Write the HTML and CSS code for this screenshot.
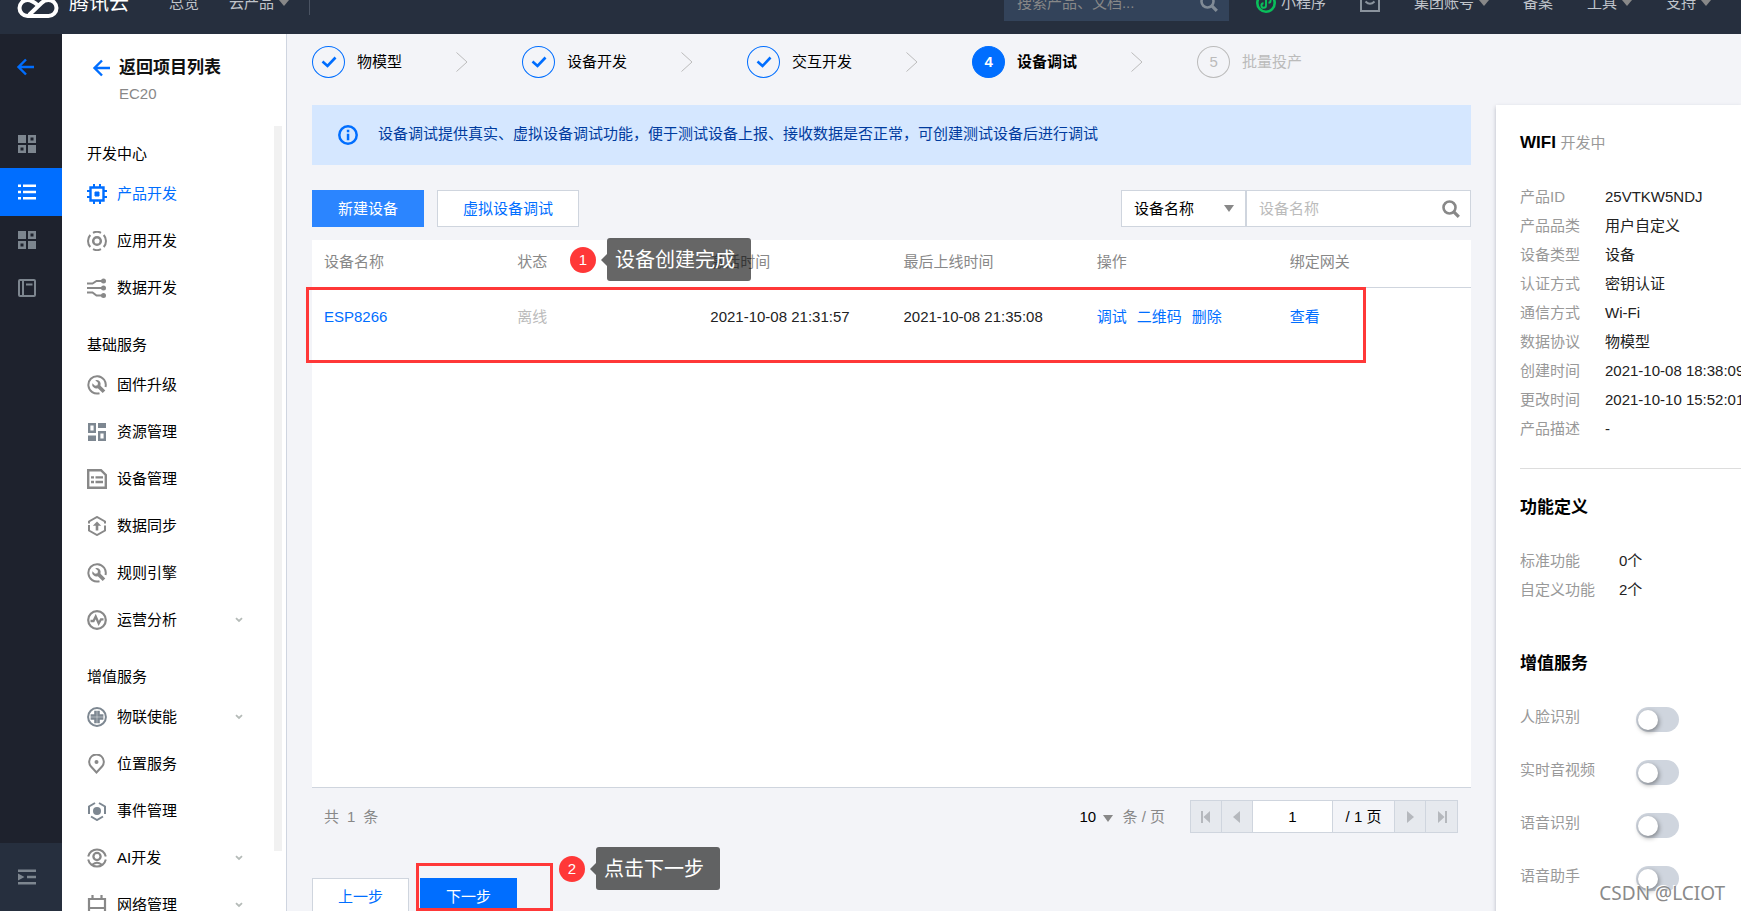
FILE: index.html
```html
<!DOCTYPE html>
<html lang="zh-CN">
<head>
<meta charset="utf-8">
<title>设备调试</title>
<link rel="stylesheet" href="styles.css">
</head>
<body>
<svg class="sprite" aria-hidden="true">
  <symbol id="back" viewBox="0 0 18 18"><path d="M10 1.5 2.5 9l7.500 7.500M2.500 9H18" fill="none" stroke="currentColor" stroke-width="2.400"/></symbol>
  <symbol id="grid" viewBox="0 0 18 18"><path fill="currentColor" fill-rule="evenodd" d="M0 0h8v8H0zM10 0h8v8h-8zm2.500 2.500v3h3v-3zM0 10h8v8H0zm2.500 2.500v3h3v-3zM10 10h8v8h-8z"/></symbol>
  <symbol id="wrench" viewBox="0 0 20 20"><path d="M12.500 18.200A8.700 8.700 0 1 1 18.500 12" fill="none" stroke="currentColor" stroke-width="2"/><path fill="currentColor" d="M8.200 5.200a4.300 4.300 0 0 1 5.300 5.600l4.800 4.700-2.600 2.600-4.900-4.800a4.300 4.300 0 0 1-5.500-5.100l2.700 2.600 2.500-.6.500-2.400z"/></symbol>
  <symbol id="search" viewBox="0 0 18 18"><circle cx="7.500" cy="7.500" r="6" fill="none" stroke="currentColor" stroke-width="2.600"/><path d="m11.800 11.800 5 5" stroke="currentColor" stroke-width="3.200"/></symbol>
  <symbol id="down" viewBox="0 0 8 6"><path d="M1 1.200 4 4l3-2.800" fill="none" stroke="currentColor" stroke-width="1.800"/></symbol>
  <symbol id="check" viewBox="0 0 16 12"><path d="m1.500 5.500 5 4.500 8-8.500" fill="none" stroke="currentColor" stroke-width="2.600"/></symbol>
  <symbol id="chevron" viewBox="0 0 12 20"><path d="m.5.500 10.500 9.500L.5 19.500" fill="none" stroke="currentColor"/></symbol>
</svg>

<header class="topbar">
  <svg class="logo" viewBox="0 0 42 30"><g fill="none" stroke="#fff" stroke-width="4"><path d="M20.500 17c-4-3.500-6.500-5-10-5a8 8 0 0 0 0 16h21a8 8 0 0 0 0-16c-3 0-5 1-7 3L12 27"/><path d="M6 13C7 6 12 2 19 2c6 0 10 3.500 12 9"/></g></svg>
  <span class="brand">腾讯云</span>
  <nav class="topnav">
    <a href="#">总览</a>
    <a href="#" class="caret">云产品</a>
  </nav>
  <span class="divider"></span>
  <div class="topsearch">
    <input type="text" aria-label="搜索" placeholder="搜索产品、文档...">
    <svg class="i18"><use href="#search"/></svg>
  </div>
  <nav class="toplinks">
    <a href="#" class="mini"><svg class="i20" viewBox="0 0 20 20" fill="none" stroke="#0abf5b"><circle cx="10" cy="10" r="8.700" stroke-width="2.600"/><path d="M7.500 10.200a2.300 2.300 0 1 0 2.500 2.300V7.500a2.300 2.300 0 1 1 2.500 2.300" stroke-width="1.900"/></svg>小程序</a>
    <a href="#" aria-label="消息"><svg class="i20" viewBox="0 0 20 20" fill="none" stroke="#8a939d" stroke-width="2"><path d="M1 3h18v15H1z"/><path d="M5.500 8.500q4.500 4.500 9 0"/></svg></a>
    <a href="#" class="caret">集团账号</a>
    <a href="#">备案</a>
    <a href="#" class="caret">工具</a>
    <a href="#" class="caret">支持</a>
  </nav>
</header>

<div class="shell">
  <nav class="rail">
    <a href="#" class="rail-back" aria-label="返回"><svg class="i18"><use href="#back"/></svg></a>
    <a href="#" aria-label="概览"><svg class="i18"><use href="#grid"/></svg></a>
    <a href="#" class="active" aria-label="项目列表"><svg class="i18" viewBox="0 0 18 18"><path fill="currentColor" d="M0 1.500h3v2.500H0zM5 1.500h13v2.500H5zM0 7.800h3v2.500H0zM5 7.800h13v2.500H5zM0 14h3v2.500H0zM5 14h13v2.500H5z"/></svg></a>
    <a href="#" aria-label="应用"><svg class="i18"><use href="#grid"/></svg></a>
    <a href="#" aria-label="文档"><svg class="i18" viewBox="0 0 18 18" fill="none" stroke="currentColor"><rect x="1" y="1" width="16" height="16" rx="1" stroke-width="2"/><path d="M5 1v16M8 5.500h6.500" stroke-width="2"/></svg></a>
    <button class="rail-toggle" aria-label="展开菜单"><svg class="i18" viewBox="0 0 18 18"><path fill="currentColor" d="M0 1.500h18V4H0zM9 7.800h9v2.400H9zM0 14h18v2.500H0zM0 5.500 6.500 9 0 12.500z"/></svg></button>
  </nav>

  <aside class="sidebar">
    <div class="side-head">
      <a href="#"><svg class="i18"><use href="#back"/></svg>返回项目列表</a>
      <p>EC20</p>
    </div>
    <div class="side-body">
      <div class="menu">
        <section>
          <h3>开发中心</h3>
          <a href="#" class="current"><svg class="i20" viewBox="0 0 20 20" fill="none" stroke="currentColor"><path d="M3.500 3.500h13v13h-13z" stroke-width="2.400"/><path d="M8 8h4v4H8z" fill="currentColor"/><path d="M7 0v3M13 0v3M7 17v3M13 17v3M0 7h3M0 13h3M17 7h3M17 13h3" stroke-width="2"/></svg>产品开发</a>
          <a href="#"><svg class="i20" viewBox="0 0 20 20" fill="none" stroke="currentColor" stroke-width="2"><circle cx="10" cy="10" r="3.800" stroke-width="2.500"/><path d="M6 1.800a9 9 0 0 1 8 0M6 18.200a9 9 0 0 0 8 0M3.300 4a9 9 0 0 0 0 12M16.700 4a9 9 0 0 1 0 12"/></svg>应用开发</a>
          <a href="#"><svg class="i20" viewBox="0 0 20 20" fill="none" stroke="currentColor" stroke-width="2"><path d="M0 5.500h5.500l4-2.500H15M0 10h16M0 14.500h5.500l4 3H15"/><g fill="currentColor" stroke="none"><circle cx="16.500" cy="3" r="2.500"/><circle cx="16.500" cy="10" r="2.500"/><circle cx="16.500" cy="17.500" r="2.500"/></g></svg>数据开发</a>
        </section>
        <section>
          <h3>基础服务</h3>
          <a href="#"><svg class="i20"><use href="#wrench"/></svg>固件升级</a>
          <a href="#" class="cool"><svg class="i20" viewBox="0 0 20 20" fill="none" stroke="currentColor" stroke-width="2.400"><path d="M2.200 2.200h5.600v7.600H2.200zM12.200 10.200h5.600v7.600h-5.600z"/><path fill="currentColor" stroke="none" d="M11 1h8v5h-8zM1 13.500h8v5.500H1z"/></svg>资源管理</a>
          <a href="#"><svg class="i20" viewBox="0 0 20 20"><path d="M1.200 1.200H14l4.800 4.800v12.800H1.200z" fill="none" stroke="currentColor" stroke-width="2.400"/><path fill="currentColor" d="M4 7.200h3v2.400H4zM8.500 7.200H16v2.400H8.500zM4 11.800h3v2.400H4zM8.500 11.800H16v2.400H8.500z"/></svg>设备管理</a>
          <a href="#"><svg class="i20" viewBox="0 0 20 20" fill="none" stroke="currentColor" stroke-width="2"><path d="M2 7.500V5.500L10 1l8 4.500v2M2 9v5.500L10 19l8-4.500V12M18 12V9.500"/><path d="M10 14.500V8" stroke-width="2.600"/><path d="m5.800 9.700 4.200-4.200 4.200 4.200z" fill="currentColor" stroke="none"/></svg>数据同步</a>
          <a href="#"><svg class="i20"><use href="#wrench"/></svg>规则引擎</a>
          <a href="#"><svg class="i20" viewBox="0 0 20 20" fill="none" stroke="currentColor"><circle cx="10" cy="10" r="8.800" stroke-width="2.200"/><path d="M3.500 11h3L8.700 6.500l3 7L14 9.300h2.500" stroke-width="2.300"/></svg>运营分析<svg class="more"><use href="#down"/></svg></a>
        </section>
        <section>
          <h3>增值服务</h3>
          <a href="#" class="cool"><svg class="i20" viewBox="0 0 20 20"><circle cx="10" cy="10" r="8.900" fill="none" stroke="currentColor" stroke-width="2"/><path fill="currentColor" d="M7.200 3.800h5.600v3.400h3.600v5.600h-3.600v3.400H7.200v-3.400H3.600V7.200h3.600z"/><path d="M10 3v14M3 10h14" stroke="#fff" stroke-width=".4"/></svg>物联使能<svg class="more"><use href="#down"/></svg></a>
          <a href="#"><svg class="i20" viewBox="0 0 20 20"><path d="M9.500 18.500 3.800 12.300a7.300 7.300 0 1 1 11.400 0z" fill="none" stroke="currentColor" stroke-width="2"/><circle cx="9.500" cy="8" r="2" fill="currentColor"/></svg>位置服务</a>
          <a href="#" class="cool"><svg class="i20" viewBox="0 0 20 20" fill="none" stroke="currentColor" stroke-width="2"><path d="M8 2 2 5.500V13M12 2l6 3.500V13M4 15.500l6 3.500 6-3.500"/><circle cx="10" cy="10" r="4" fill="currentColor" stroke="none"/></svg>事件管理</a>
          <a href="#"><svg class="i20" viewBox="0 0 20 20" fill="none" stroke="currentColor" stroke-width="2"><circle cx="10" cy="8.500" r="3.600" stroke-width="2.300"/><path d="M1.200 8.500a9 9 0 0 1 17.600 0M1.200 11.500a9 9 0 0 0 17.600 0M5.500 16.500q4.500-3.500 9 0"/></svg>AI开发<svg class="more"><use href="#down"/></svg></a>
          <a href="#"><svg class="i20" viewBox="0 0 20 20" fill="none" stroke="currentColor" stroke-width="2.200"><path d="M2 4h16v15H2zM2 13h16M5.500 0v4M14.500 0v4"/></svg>网络管理<svg class="more"><use href="#down"/></svg></a>
        </section>
      </div>
      <div class="track"></div>
    </div>
  </aside>

  <main class="main">
    <ol class="steps">
      <li><span class="dot"><svg><use href="#check"/></svg></span>物模型<svg class="chev"><use href="#chevron"/></svg></li>
      <li><span class="dot"><svg><use href="#check"/></svg></span>设备开发<svg class="chev"><use href="#chevron"/></svg></li>
      <li><span class="dot"><svg><use href="#check"/></svg></span>交互开发<svg class="chev"><use href="#chevron"/></svg></li>
      <li class="now"><span class="dot">4</span>设备调试<svg class="chev"><use href="#chevron"/></svg></li>
      <li class="todo"><span class="dot">5</span>批量投产</li>
    </ol>

    <div class="columns">
      <div class="work">
        <div class="alert">
          <svg class="i20" viewBox="0 0 20 20"><circle cx="10" cy="10" r="8.700" fill="none" stroke="#006eff" stroke-width="2.500"/><path fill="#006eff" d="M8.800 4.800h2.500v2.400H8.800zM8.800 8.700h2.500v6.500H8.800z"/></svg>
          <p>设备调试提供真实、虚拟设备调试功能，便于测试设备上报、接收数据是否正常，可创建测试设备后进行调试</p>
        </div>

        <div class="toolbar">
          <button class="btn primary hover">新建设备</button>
          <button class="btn">虚拟设备调试</button>
          <div class="filter">
            <div class="pick">
              <select aria-label="搜索字段"><option>设备名称</option></select>
            </div>
            <div class="query">
              <input type="text" aria-label="设备名称" placeholder="设备名称">
              <svg class="i18"><use href="#search"/></svg>
            </div>
          </div>
        </div>

        <div class="panel">
          <table>
            <thead><tr><th>设备名称</th><th>状态</th><th>激活时间</th><th>最后上线时间</th><th>操作</th><th>绑定网关</th></tr></thead>
            <tbody><tr>
              <td><a href="#">ESP8266</a></td><td class="off">离线</td><td>2021-10-08 21:31:57</td><td>2021-10-08 21:35:08</td>
              <td><div class="ops"><a href="#">调试</a><a href="#">二维码</a><a href="#">删除</a></div></td><td><a href="#">查看</a></td>
            </tr></tbody>
          </table>
          <div class="frame frame-row"></div>
          <div class="note note-one"><span class="num">1</span><span class="tip">设备创建完成</span></div>
        </div>

        <div class="pager">
          <div class="total"><span>共</span><span>1</span><span>条</span></div>
          <label class="size"><select aria-label="每页条数"><option>10</option></select>条 / 页</label>
          <div class="pages">
            <button aria-label="首页"><svg viewBox="0 0 10 12"><path fill="currentColor" d="M0 0h2v12H0zM9 0v12L2.500 6z"/></svg></button>
            <button aria-label="上一页"><svg viewBox="0 0 10 12"><path fill="currentColor" d="M8 0v12L1 6z"/></svg></button>
            <input type="text" value="1" aria-label="页码">
            <span>/ 1 页</span>
            <button aria-label="下一页"><svg viewBox="0 0 10 12"><path fill="currentColor" d="M2 0v12l7-6z"/></svg></button>
            <button aria-label="末页"><svg viewBox="0 0 10 12"><path fill="currentColor" d="M8 0h2v12H8zM1 0v12l6.500-6z"/></svg></button>
          </div>
        </div>

        <div class="actions">
          <button class="btn">上一步</button>
          <button class="btn primary">下一步</button>
          <div class="frame frame-next"></div>
          <div class="note note-two"><span class="num">2</span><span class="tip">点击下一步</span></div>
        </div>
      </div>

      <aside class="info">
        <h2 class="product">WIFI <small>开发中</small></h2>
        <dl class="facts">
          <dt>产品ID</dt><dd>25VTKW5NDJ</dd>
          <dt>产品品类</dt><dd>用户自定义</dd>
          <dt>设备类型</dt><dd>设备</dd>
          <dt>认证方式</dt><dd>密钥认证</dd>
          <dt>通信方式</dt><dd>Wi-Fi</dd>
          <dt>数据协议</dt><dd>物模型</dd>
          <dt>创建时间</dt><dd>2021-10-08 18:38:09</dd>
          <dt>更改时间</dt><dd>2021-10-10 15:52:01</dd>
          <dt>产品描述</dt><dd>-</dd>
        </dl>
        <h2 class="features">功能定义</h2>
        <dl class="facts wide">
          <dt>标准功能</dt><dd>0个</dd>
          <dt>自定义功能</dt><dd>2个</dd>
        </dl>
        <h2 class="services">增值服务</h2>
        <div class="switches">
          <label>人脸识别<input type="checkbox"></label>
          <label>实时音视频<input type="checkbox"></label>
          <label>语音识别<input type="checkbox"></label>
          <label>语音助手<input type="checkbox"></label>
        </div>
      </aside>
    </div>
  </main>
</div>
<div class="watermark">CSDN @LCIOT</div>
</body>
</html>
```

FILE: styles.css
```css
* { box-sizing: border-box; }
body {
  margin: 0;
  height: 100vh;
  overflow: hidden;
  display: flex;
  flex-direction: column;
  position: relative;
  background: #f3f4f8;
  color: #000;
  font: 15px/20px "Liberation Sans", "Noto Sans CJK SC", sans-serif;
}
a { color: #006eff; text-decoration: none; }
h2, h3, p, dl, dd, ol { margin: 0; padding: 0; }
button, input, select { font: inherit; margin: 0; border-radius: 0; outline: 0; }
svg { flex: none; display: block; }
.sprite { position: absolute; width: 0; height: 0; }
.i18 { width: 18px; height: 18px; }
.i20 { width: 20px; height: 20px; }

/* top bar, scrolled partly out of view */
.topbar {
  flex: none;
  display: flex;
  align-items: center;
  height: 62px;
  margin-top: -28px;
  padding: 0 30px 0 17px;
  background: #262f3e;
  color: #c8ccd2;
}
.topbar a { display: flex; align-items: center; color: #c0c4ca; white-space: nowrap; }
.logo { width: 42px; height: 30px; margin-right: 10px; }
.brand { font-size: 20px; color: #fff; margin-right: 40px; }
.topnav { display: flex; gap: 30px; }
.caret::after {
  content: "";
  margin-left: 5px;
  border: 5px solid transparent;
  border-top: 6px solid #888;
  border-bottom: 0;
}
.divider { width: 1px; height: 24px; margin-left: 20px; background: #4a5362; }
.topsearch {
  display: flex;
  align-items: center;
  width: 225px;
  height: 36px;
  margin-left: auto;
  padding: 0 11px 0 13px;
  background: #33435a;
  color: #818b96;
}
.topsearch input { flex: 1; min-width: 0; padding: 0; border: 0; background: none; color: #fff; }
.topsearch input::placeholder { color: #888; }
.toplinks { display: flex; align-items: center; gap: 34px; margin-left: 27px; }
.mini { gap: 5px; }

.shell { flex: 1; min-height: 0; display: flex; }

/* icon rail */
.rail { flex: none; width: 62px; display: flex; flex-direction: column; background: #1e222d; }
.rail a { display: flex; align-items: center; height: 48px; padding-left: 18px; color: #7d868f; }
.rail .rail-back { height: 66px; margin-bottom: 20px; padding-left: 16px; color: #006eff; }
.rail .active { background: #006eff; color: #fff; }
.rail-toggle {
  height: 68px;
  margin-top: auto;
  padding: 0 0 0 18px;
  border: 0;
  background: #262f3e;
  color: #7d868f;
}

/* project menu */
.sidebar {
  flex: none;
  width: 225px;
  display: flex;
  flex-direction: column;
  background: #fff;
  border-right: 1px solid #cfd5e0;
}
.side-head { height: 92px; padding: 21px 0 0 30px; }
.side-head a { display: flex; align-items: center; gap: 9px; font-size: 17px; line-height: 26px; font-weight: bold; color: #111; }
.side-head svg { color: #006eff; }
.side-head p { padding: 3px 0 0 27px; color: #888; }
.side-body { flex: 1; min-height: 0; display: flex; padding-right: 4px; }
.menu { flex: 1; overflow: hidden; padding: 11px 0 0 25px; }
.track { width: 8px; margin-bottom: 60px; background: #f1f1f1; }
.menu section { margin-bottom: 17px; }
.menu h3 { font-size: 15px; line-height: 33px; font-weight: normal; }
.menu a { display: flex; align-items: center; gap: 10px; height: 47px; padding-right: 31px; color: #000; }
.menu svg { color: #888; }
.menu .cool svg { color: #7d8791; }
.menu .current, .menu .current svg { color: #006eff; }
.menu a .more { width: 8px; height: 6px; margin-left: auto; color: #b5bbb8; }

/* steps */
.main { flex: 1; min-width: 0; padding-left: 25px; }
.steps { display: flex; height: 71px; padding-top: 12px; list-style: none; }
.steps li { display: flex; align-items: center; height: 32px; white-space: nowrap; }
.dot {
  display: flex;
  align-items: center;
  justify-content: center;
  width: 33px;
  height: 32px;
  margin-right: 12px;
  border: 1px solid #006eff;
  border-radius: 50%;
  color: #006eff;
}
.dot svg { width: 16px; height: 12px; }
.chev { width: 12px; height: 20px; margin: 0 54px; color: #bbb; }
.now { font-weight: bold; }
.now .dot { background: #006eff; color: #fff; }
.todo { color: #bbb; }
.todo .dot { border-color: #bbb; color: #bbb; }

.columns { display: grid; grid-template-columns: minmax(0, 1fr) 245px; gap: 25px; }

.alert { display: flex; align-items: center; gap: 20px; height: 60px; padding: 0 26px; background: #d5e7ff; color: #003b9e; }
.alert p { padding-bottom: 2px; }

.toolbar { display: flex; margin: 25px 0 13px; }
.btn { height: 37px; padding: 0 25px; border: 1px solid #cfd5de; background: #fff; color: #006eff; }
.btn.primary { border-color: #006eff; background: #006eff; color: #fff; }
.btn.hover { border-color: #2b85ff; background: #2b85ff; }
.toolbar .btn { margin-right: 13px; }
.filter { display: flex; margin-left: auto; }
.pick, .query { display: flex; align-items: center; height: 37px; border: 1px solid #cfd5de; background: #fff; }
.pick { position: relative; width: 125px; }
.pick::after {
  content: "";
  position: absolute;
  right: 11px;
  border: 5px solid transparent;
  border-top: 7px solid #888;
  border-bottom: 0;
  pointer-events: none;
}
.pick select { flex: 1; height: 100%; padding: 0 12px; border: 0; appearance: none; background: none; color: #000; }
.query { width: 225px; padding: 0 10px 0 12px; color: #888; }
.query input { flex: 1; min-width: 0; padding: 0; border: 0; background: none; }
.query input::placeholder { color: #bbb; }

/* device table */
.panel { position: relative; min-height: 548px; background: #fff; border-bottom: 1px solid #cfd5de; }
table { width: 100%; table-layout: fixed; border-collapse: collapse; }
th, td { padding: 0 0 0 12px; text-align: left; font-weight: normal; white-space: nowrap; }
th { height: 47px; padding-bottom: 2px; color: #888; border-bottom: 1px solid #cfd5de; }
td { height: 60px; color: #222; }
td.off { color: #bbb; }
.ops { display: flex; gap: 10px; }

/* pager */
.pager { display: flex; align-items: center; padding: 12px 13px 0 12px; color: #888; }
.total { display: flex; gap: 8px; margin-right: auto; }
.size { display: flex; align-items: center; margin-right: 25px; position: relative; }
.size select { width: 43px; padding: 0; border: 0; appearance: none; background: none; color: #000; }
.size::after {
  content: "";
  position: absolute;
  left: 24px;
  bottom: 5px;
  border: 5px solid transparent;
  border-top: 7px solid #888;
  border-bottom: 0;
  pointer-events: none;
}
.pages { display: flex; height: 33px; border: 1px solid #cfd5de; }
.pages > * { border: 0; border-right: 1px solid #cfd5de; }
.pages > :last-child { border-right: 0; }
.pages button { display: flex; align-items: center; justify-content: center; width: 31px; padding: 0; background: #e6e9ee; color: #b5b8bd; }
.pages svg { width: 10px; height: 12px; }
.pages input { width: 80px; padding: 0; text-align: center; background: #fff; }
.pages span { width: 62px; line-height: 31px; text-align: center; color: #000; }

.actions { position: relative; display: flex; gap: 11px; margin-top: 45px; }

/* callouts laid over the page */
.frame { position: absolute; border: 3px solid #ff3838; pointer-events: none; }
.frame-row { left: -6px; right: 105px; top: 47px; height: 76px; }
.frame-next { left: 104px; top: -15px; width: 137px; height: 48px; }
.note { position: absolute; display: flex; align-items: center; gap: 11px; }
.note-one { left: 258px; top: -2px; }
.note-two { left: 247px; top: -31px; }
.num { width: 26px; line-height: 26px; border-radius: 50%; background: #ff3838; color: #fff; text-align: center; }
.tip { position: relative; padding: 1px 16px 0 8px; border-radius: 3px; background: rgba(0, 0, 0, .6); color: #fff; font-size: 20px; line-height: 42px; white-space: nowrap; }
.tip::before {
  content: "";
  position: absolute;
  right: 100%;
  top: 16px;
  border: 6px solid transparent;
  border-right-color: rgba(0, 0, 0, .6);
  border-left: 0;
}

/* product summary */
.info { padding: 24px 0 0 24px; background: #fff; box-shadow: 0 2px 4px rgba(54, 58, 80, .32); overflow: hidden; white-space: nowrap; }
.info h2 { font-size: 17px; line-height: 28px; }
.info small { font-size: 15px; font-weight: normal; color: #999; }
.facts { display: grid; grid-template-columns: 85px 1fr; line-height: 29px; margin-top: 25px; }
.facts.wide { grid-template-columns: 99px 1fr; margin-top: 24px; }
.facts dt { color: #999; }
.facts dd { color: #222; }
.info .features { margin-top: 25px; padding-top: 25px; border-top: 1px solid #ddd; }
.info .services { margin-top: 46px; }
.switches { display: flex; flex-direction: column; gap: 28px; margin-top: 29px; }
.switches label { display: flex; align-items: flex-start; justify-content: space-between; width: 159px; height: 25px; color: #999; }
.switches input { position: relative; flex: none; width: 43px; height: 25px; border-radius: 13px; appearance: none; background: #cfd5de; }
.switches input::before {
  content: "";
  position: absolute;
  left: 2px;
  top: 3px;
  width: 20px;
  height: 20px;
  border-radius: 50%;
  background: #fff;
  box-shadow: 1px 2px 5px rgba(0, 0, 0, .4);
}

.watermark {
  position: absolute;
  right: 16px;
  bottom: 4px;
  color: #8a8a8a;
  font: 19px/28px "Noto Sans", sans-serif;
  text-shadow: -1px -1px 0 #fff;
}
```
